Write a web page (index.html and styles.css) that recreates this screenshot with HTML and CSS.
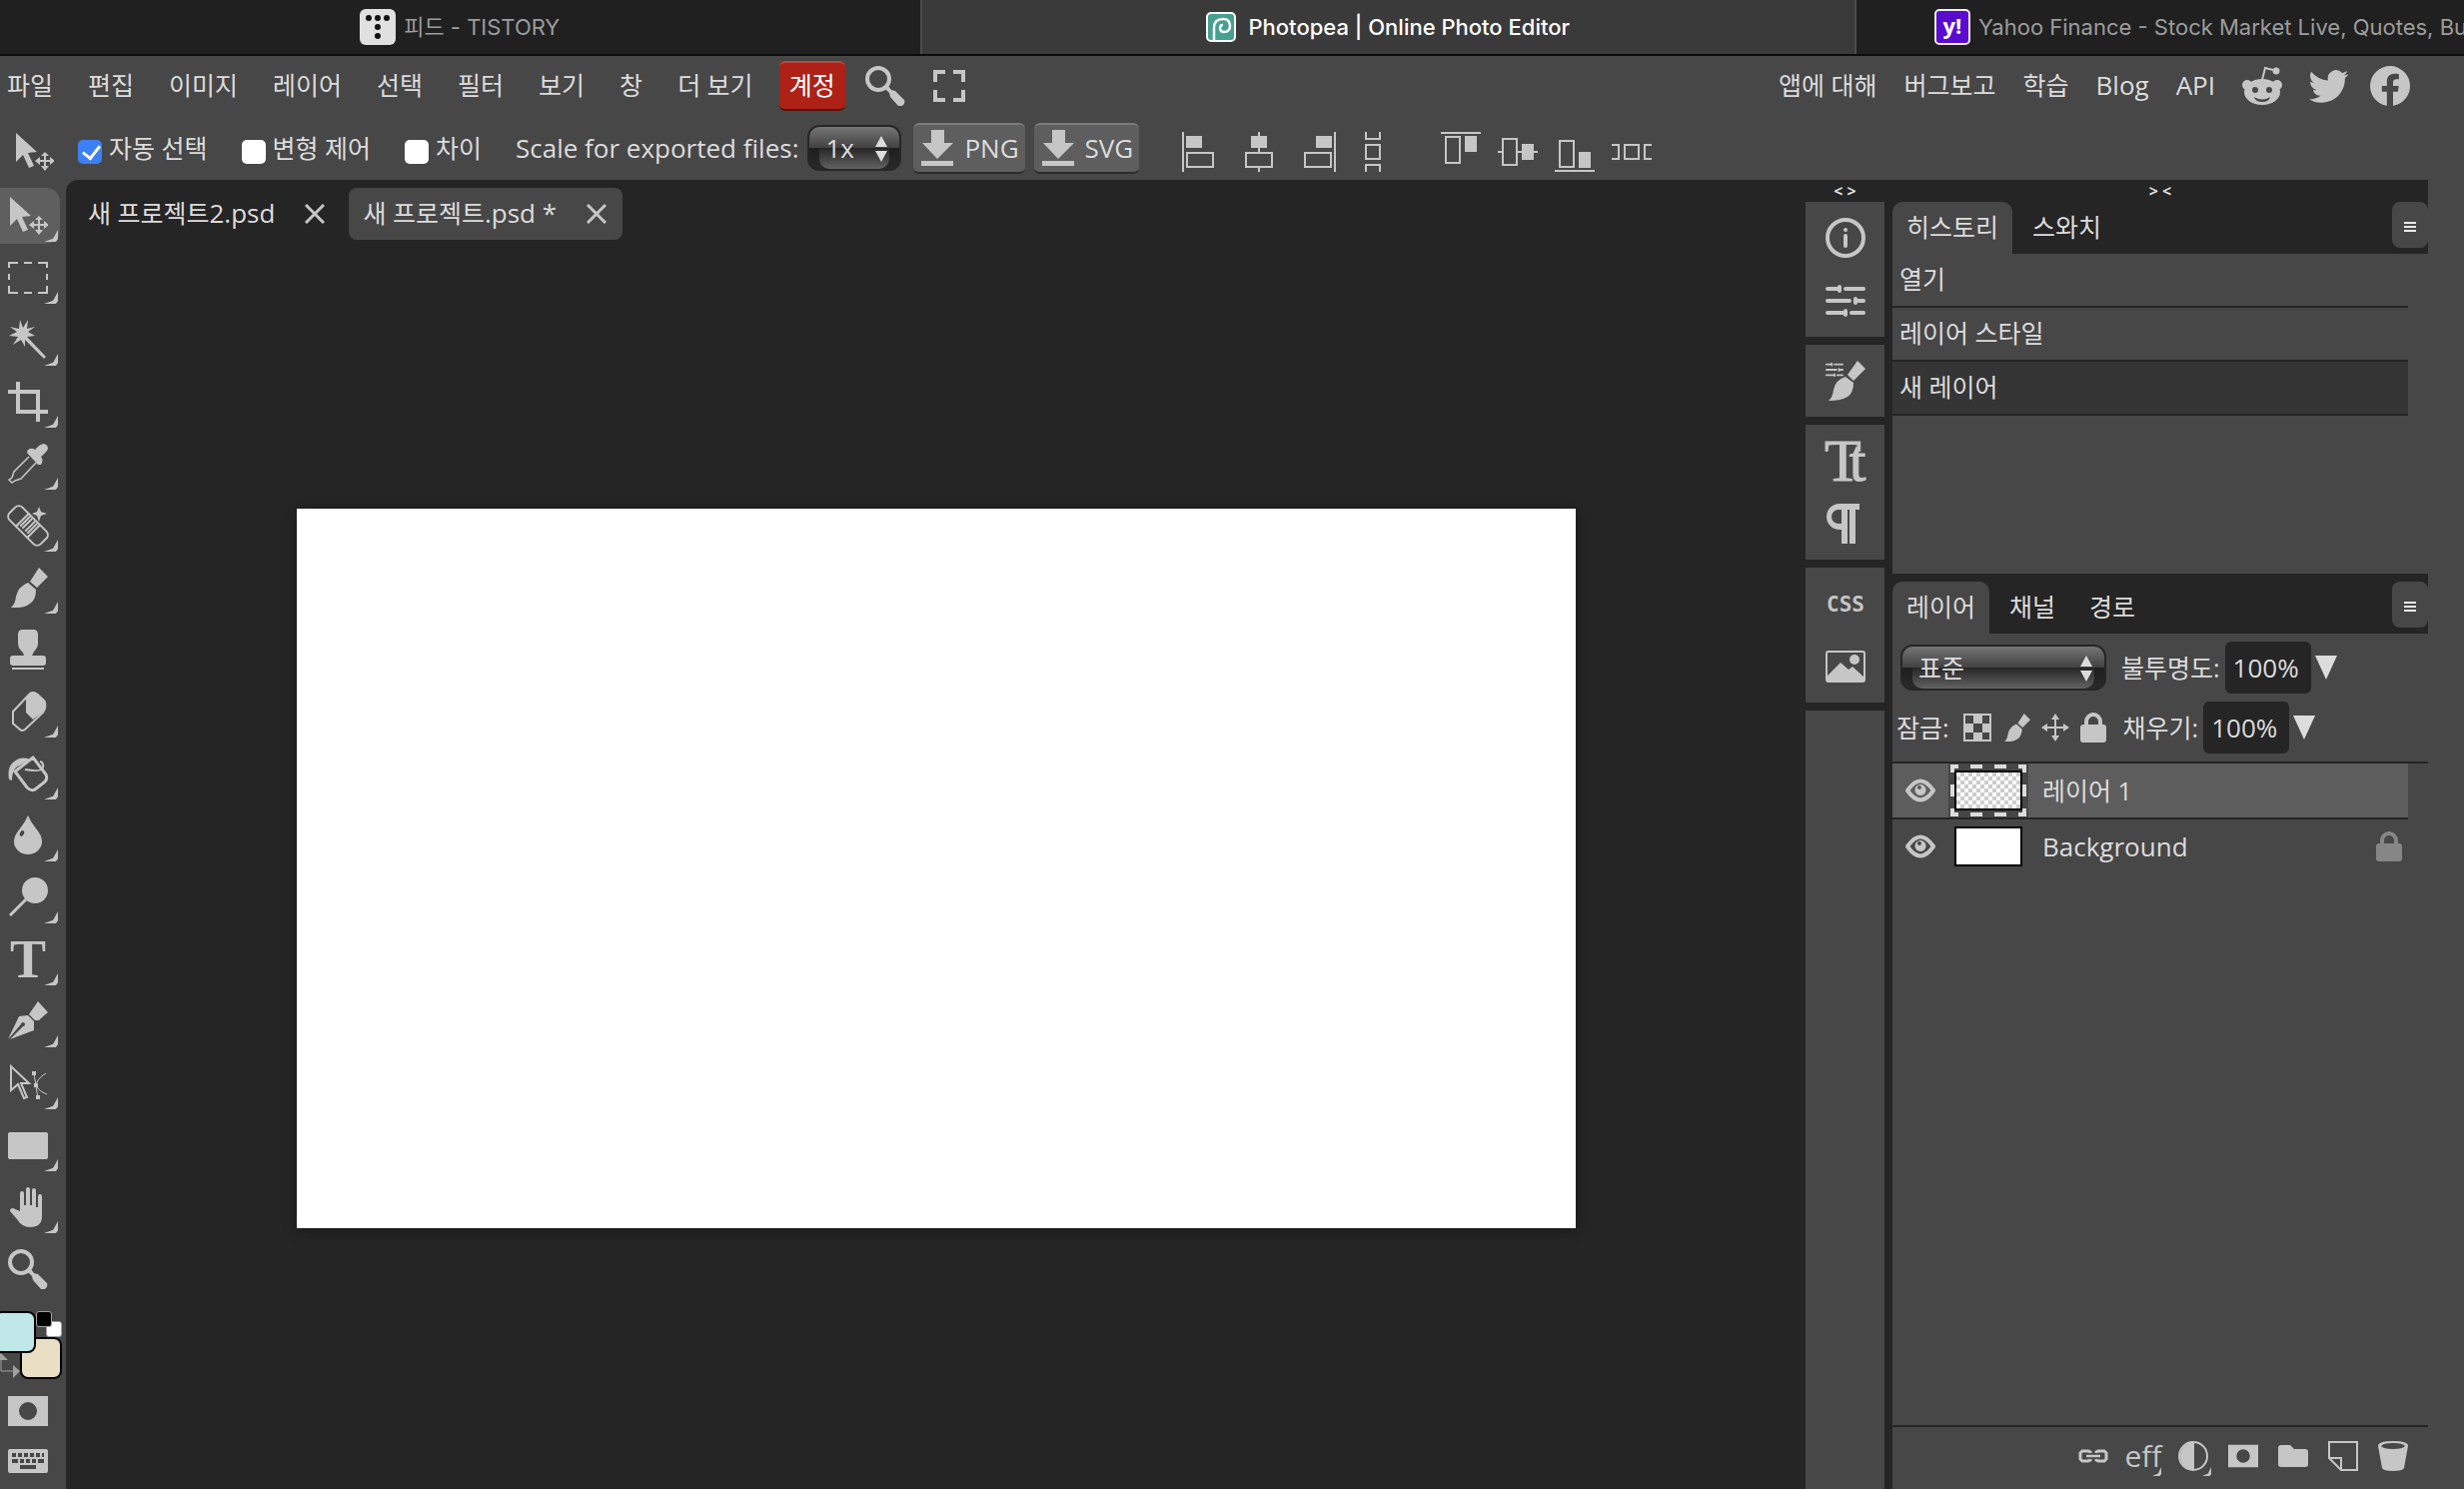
FILE: index.html
```html
<!DOCTYPE html>
<html lang="ko">
<head>
    <meta charset="UTF-8">
    <meta name="viewport" content="width=device-width, initial-scale=1.0">
    <title>Photopea | Online Photo Editor</title>
    <link rel="stylesheet" href="styles.css">
</head>
<body>
    <!-- shared icons -->
    <svg class="defs" aria-hidden="true">
        <symbol id="i-move" viewBox="0 0 40 40">
            <path d="M2 1v29l7-7 6 13 5-2-6-13 9-1z"/>
            <path d="M31 20l-4 4h3v4h-4v-3l-5 4 5 4v-3h4v4h-3l4 5 4-5h-3v-4h4v3l5-4-5-4v3h-4v-4h3z"/>
        </symbol>
        <symbol id="i-search" viewBox="0 0 40 40">
            <circle cx="13" cy="13" r="11" fill="none" stroke="currentColor" stroke-width="4"/>
            <path d="M20 23l3-3 3 4 4 1 9 9q1 3-1 5t-5 1l-8-9-1-4z"/>
        </symbol>
        <symbol id="i-brush" viewBox="0 0 40 40">
            <path d="M31 0l9 9-11 11-7-6zM20 15l8 7q0 10-6 14-6 5-19 4 4-3 5-11 2-10 12-14z"/>
        </symbol>
        <symbol id="i-mask" viewBox="0 0 40 40">
            <path fill-rule="evenodd" d="M0 5h40v30H0zM20 11a9 9 0 1 0 0 18 9 9 0 1 0 0-18z"/>
        </symbol>
        <symbol id="i-lock" viewBox="0 0 26 30">
            <path d="M6 13V9a7 7 0 0 1 14 0v4" fill="none" stroke="currentColor" stroke-width="4"/>
            <rect y="12" width="26" height="18" rx="3"/>
        </symbol>
        <symbol id="i-down" viewBox="0 0 32 36">
            <path d="M10 0h13v13h9L16 29 1 13h9zM0 31h32v5H0z"/>
        </symbol>
        <symbol id="i-x" viewBox="0 0 20 20">
            <path d="M1 1l18 18M19 1L1 19" stroke="currentColor" stroke-width="3"/>
        </symbol>
        <symbol id="i-eye" viewBox="0 0 30 24">
            <path d="M2 12q13-19 26 0-13 19-26 0z" fill="none" stroke="currentColor" stroke-width="4"/>
            <path fill-rule="evenodd" d="M15 6a5.500 5.500 0 1 0 .1 0zM14 7a2 2 0 1 1-.1 0z"/>
        </symbol>
        <symbol id="i-updown" viewBox="0 0 12 26">
            <path d="M6 0l6 11H0zM0 15h12L6 26z"/>
        </symbol>
    </svg>

    <nav class="browser-tabs">
        <a class="browser-tab" href="#">
            <svg class="fav" viewBox="0 0 36 36"><rect width="36" height="36" rx="6" fill="#e0e0e0"/><g fill="#111"><circle cx="9" cy="9" r="3"/><circle cx="18" cy="9" r="3"/><circle cx="27" cy="9" r="3"/><circle cx="18" cy="18" r="3"/><circle cx="18" cy="27" r="3"/></g></svg>
            피드 - TISTORY
        </a>
        <a class="browser-tab current" href="#">
            <svg class="fav small" viewBox="0 0 30 30"><rect x="1" y="1" width="28" height="28" rx="4" fill="#45a08f" stroke="#fff" stroke-width="2"/><path d="M8 28V16q0-9 9-9 7 0 7 7 0 6-6 6-4 0-4-4 0-3 3-3" fill="none" stroke="#fff" stroke-width="2.500"/></svg>
            Photopea | Online Photo Editor
        </a>
        <a class="browser-tab last" href="#">
            <svg class="fav" viewBox="0 0 36 36"><rect x="1" y="1" width="34" height="34" rx="4" fill="#5b0bd0" stroke="#eee" stroke-width="2"/><text x="18" y="25" text-anchor="middle" class="yahoo">y!</text></svg>
            Yahoo Finance - Stock Market Live, Quotes, Bu
        </a>
    </nav>

    <header class="menubar">
        <button>파일</button>
        <button>편집</button>
        <button>이미지</button>
        <button>레이어</button>
        <button>선택</button>
        <button>필터</button>
        <button>보기</button>
        <button>창</button>
        <button>더 보기</button>
        <button class="account">계정</button>
        <button class="menu-icon" aria-label="검색"><svg width="40" height="40"><use href="#i-search"/></svg></button>
        <button class="menu-icon full" aria-label="전체 화면"><svg width="32" height="32" viewBox="0 0 32 32"><path d="M2 12V2h10M20 2h10v10M30 20v10H20M12 30H2V20" fill="none" stroke="currentColor" stroke-width="4"/></svg></button>
        <div class="menu-links">
            <a href="#">앱에 대해</a>
            <a href="#">버그보고</a>
            <a href="#">학습</a>
            <a href="#" class="latin">Blog</a>
            <a href="#" class="latin">API</a>
            <a href="#" class="icon" aria-label="Reddit"><svg width="40" height="40" viewBox="0 0 40 40"><path d="M20 14l3-12 8 2" fill="none" stroke="currentColor" stroke-width="2"/><circle cx="34" cy="5" r="3.500"/><circle cx="5" cy="19" r="5"/><circle cx="35" cy="19" r="5"/><ellipse cx="20" cy="26" rx="18" ry="13"/><g class="hole"><circle cx="13" cy="24" r="3"/><circle cx="27" cy="24" r="3"/><path d="M12 31q8 5 16 0-1 5-8 5t-8-5z"/></g></svg></a>
            <a href="#" class="icon" aria-label="Twitter"><svg width="40" height="40" viewBox="0 0 24 24"><path d="M23.6 4.9a9.600 9.600 0 0 1-2.800.8 4.900 4.900 0 0 0 2.100-2.700 9.700 9.700 0 0 1-3.100 1.200 4.900 4.900 0 0 0-8.400 4.500A13.900 13.900 0 0 1 1.300 3.500a4.900 4.900 0 0 0 1.500 6.600 4.900 4.900 0 0 1-2.200-.6 4.900 4.900 0 0 0 3.900 4.900 4.900 4.900 0 0 1-2.200.1 4.900 4.900 0 0 0 4.600 3.400A9.900 9.900 0 0 1 0 19.900 13.900 13.900 0 0 0 7.500 22c9.100 0 14.300-7.700 14-14.600a10 10 0 0 0 2.100-2.500z"/></svg></a>
            <a href="#" class="icon fb" aria-label="Facebook"><svg width="40" height="40" viewBox="0 0 24 24"><path d="M24 12a12 12 0 1 0-13.900 11.900v-8.400h-3V12h3V9.400c0-3 1.800-4.700 4.500-4.700 1.300 0 2.700.2 2.700.2v3h-1.500c-1.500 0-2 .9-2 1.900V12h3.400l-.5 3.500h-2.900v8.400A12 12 0 0 0 24 12z"/></svg></a>
        </div>
    </header>

    <div class="options">
        <svg class="current-tool" width="40" height="40"><use href="#i-move"/></svg>
        <label class="check"><input type="checkbox" checked> 자동 선택</label>
        <label class="check"><input type="checkbox"> 변형 제어</label>
        <label class="check"><input type="checkbox"> 차이</label>
        <label class="latin scale-label" for="scale">Scale for exported files:</label>
        <span class="select scale">
            <select id="scale"><option>1x</option><option>2x</option></select>
            <svg width="12" height="26"><use href="#i-updown"/></svg>
        </span>
        <button class="export"><svg width="32" height="36"><use href="#i-down"/></svg>PNG</button>
        <button class="export"><svg width="32" height="36"><use href="#i-down"/></svg>SVG</button>
        <div class="align">
            <button aria-label="왼쪽 정렬"><svg viewBox="0 0 40 40"><path d="M0 0h2v40H0zM4 4h16v12H4z"/><path class="line" d="M5 21h26v14H5z"/></svg></button>
            <button aria-label="가운데 정렬"><svg viewBox="0 0 40 40"><path d="M19 0h2v20h-2zM19 36h2v4h-2zM12 4h16v12H12z"/><path class="line" d="M7 21h26v14H7z"/></svg></button>
            <button aria-label="오른쪽 정렬"><svg viewBox="0 0 40 40"><path d="M38 0h2v40h-2zM20 4h16v12H20z"/><path class="line" d="M9 21h26v14H9z"/></svg></button>
            <button aria-label="세로 분배"><svg viewBox="0 0 40 40"><path class="line" d="M13 0v7h14V0M13 13h14v14H13zM13 40v-7h14v7"/></svg></button>
        </div>
        <div class="align">
            <button aria-label="위쪽 정렬"><svg viewBox="0 0 40 40"><path d="M0 0h40v2H0zM24 4h12v16H24z"/><path class="line" d="M5 5h14v26H5z"/></svg></button>
            <button aria-label="중간 정렬"><svg viewBox="0 0 40 40"><path d="M0 19h4v2H0zM20 19h20v2H20zM24 12h12v16H24z"/><path class="line" d="M5 7h14v26H5z"/></svg></button>
            <button aria-label="아래쪽 정렬"><svg viewBox="0 0 40 40"><path d="M0 38h40v2H0zM24 20h12v16H24z"/><path class="line" d="M5 9h14v26H5z"/></svg></button>
            <button aria-label="가로 분배"><svg viewBox="0 0 40 40"><path class="line" d="M0 13h7v14H0M13 13h14v14H13zM40 13h-7v14h7"/></svg></button>
        </div>
    </div>

    <main class="editor">
        <aside class="toolbar">
            <button class="tool on more" aria-label="이동"><svg><use href="#i-move"/></svg></button>
            <button class="tool more" aria-label="사각형 선택"><svg viewBox="0 0 40 40"><path class="line" d="M1 10V5h9M16 5h8M30 5h9v5M39 16v6M39 28v7h-9M24 35h-8M10 35H1v-7M1 22v-6"/></svg></button>
            <button class="tool more" aria-label="요술봉"><svg viewBox="0 0 40 40"><path d="M12 0l3 8 5-8-1 9 8-2-7 5 7 4-8 1 19 20-2 2-19-19 0 7-4-7-8 5 5-8-9-1 8-4-7-5 9 2z"/></svg></button>
            <button class="tool more" aria-label="자르기"><svg viewBox="0 0 40 40"><path d="M0 10h30v30M10 0v30h30" fill="none" stroke="currentColor" stroke-width="4"/></svg></button>
            <button class="tool more" aria-label="스포이드"><svg viewBox="0 0 40 40"><path d="M19 9q0-3 3-4t5 1q5-6 9-6 4 1 4 5-1 3-7 8 3 3 0 8l-3 0z"/><path d="M21 13L6 28 4 34l-3 2 3 3 3-2 6-2 15-16" fill="none" stroke="currentColor" stroke-width="1.500"/></svg></button>
            <button class="tool more" aria-label="스팟 복구"><svg viewBox="0 0 40 40"><g transform="rotate(45 20 20)" fill="none" stroke="currentColor" stroke-width="2"><rect x="-2" y="11" width="44" height="18" rx="5"/><path d="M12 11v18M28 11v18"/><path d="M15 12v16M18 12v16M22 12v16M25 12v16" stroke-dasharray="14 2"/></g><path d="M31 1l2 5 6 2-6 2-2 6-2-6-5-2 5-2z"/></svg></button>
            <button class="tool more" aria-label="브러시"><svg><use href="#i-brush"/></svg></button>
            <button class="tool" aria-label="복제 도장"><svg viewBox="0 0 40 40"><path d="M15 0h10q5 0 5 5v9q0 4-4 8l-2 4h11q3 0 3 3v4q0 3-3 3H5q-3 0-3-3v-4q0-3 3-3h11q-1-4-3-5-3-3-3-7V5q0-5 5-5zM4 38h32v2H4z"/></svg></button>
            <button class="tool more" aria-label="지우개"><svg viewBox="0 0 40 40"><path d="M5 20L22 2q3-2 6 0l8 7q2 2 1 8l-2 4-18 17q-3 2-5 0l-7-6z" fill="none" stroke="currentColor" stroke-width="2"/><path d="M18 6l4-4q4-3 8 0l6 6q3 4 1 11L25 28l-7-7z"/></svg></button>
            <button class="tool more" aria-label="페인트 통"><svg viewBox="0 0 40 40"><path d="M25 4l13 17q2 5-2 8l-9 7q-4 2-8-2L7 18z" fill="none" stroke="currentColor" stroke-width="3"/><path d="M1 26q-2-12 4-17 8-7 17-3L8 14q-4 4-4 13z"/><path d="M17 16q16 3 18-2 1-5-3-6" fill="none" stroke="currentColor" stroke-width="2"/></svg></button>
            <button class="tool more" aria-label="흐림"><svg viewBox="0 0 40 40"><path d="M20 0q3 7 8 13 6 7 6 13a14 13 0 0 1-28 0q0-6 6-13 5-6 8-13z"/><ellipse class="hole" cx="14" cy="18" rx="2" ry="3" transform="rotate(25 14 18)"/></svg></button>
            <button class="tool more" aria-label="닷지"><svg viewBox="0 0 40 40"><circle cx="27" cy="13" r="13"/><path d="M2 38l18-18" stroke="currentColor" stroke-width="3"/></svg></button>
            <button class="tool more" aria-label="문자"><svg viewBox="0 0 40 40"><text x="20" y="38" text-anchor="middle" class="glyph-t">T</text></svg></button>
            <button class="tool more" aria-label="펜"><svg viewBox="0 0 40 40"><path d="M30 0l10 11q-6 5-9 8h-4l-6-6zM11 15l9-1 6 6v9L2 38l13-13a2 2 0 1 0-2-2L0 38z"/></svg></button>
            <button class="tool more" aria-label="경로 선택"><svg viewBox="0 0 40 40"><path class="line" d="M3 3v24l7-6 6 14 3-1-6-14 8 0z"/><path d="M26 10l2 13 2 12M38 10q-10 6-10 13M28 23q4 6 11 8" fill="none" stroke="currentColor"/><path d="M24 8h4v4h-4zM26 20h4v4h-4zM28 32h4v4h-4z"/></svg></button>
            <button class="tool more" aria-label="사각형"><svg viewBox="0 0 40 40"><rect y="7" width="40" height="27" rx="2"/></svg></button>
            <button class="tool more" aria-label="손"><svg viewBox="0 0 40 40"><path d="M12 24V6q0-2 2-2t2 2v12h2V2q0-2 2-2t2 2v16h2V3q0-2 2-2t2 2v17h2V9q0-2 2-2t2 2v20q0 11-12 11-8 0-13-8L2 24q0-3 3-3z"/></svg></button>
            <button class="tool" aria-label="돋보기"><svg><use href="#i-search"/></svg></button>

            <div class="colors">
                <button class="swatch back" aria-label="배경색"></button>
                <button class="swatch front" aria-label="전경색"></button>
                <button class="mini white" aria-label="흰색"></button>
                <button class="mini black" aria-label="검은색"></button>
                <svg class="swap" viewBox="0 0 20 26"><path d="M1 6v12h13" fill="none" stroke="currentColor"/><path d="M-6 7l7-7 7 7zM13 12l7 6-7 7z"/></svg>
            </div>
            <button class="tool flat" aria-label="빠른 마스크"><svg><use href="#i-mask"/></svg></button>
            <button class="tool flat" aria-label="키보드"><svg viewBox="0 0 40 40"><path fill-rule="evenodd" d="M2 8h36q2 0 2 2v20q0 2-2 2H2q-2 0-2-2V10q0-2 2-2zM4 12v4h4v-4zM10 12v4h4v-4zM16 12v4h4v-4zM22 12v4h4v-4zM28 12v4h4v-4zM34 12v4h2v-4zM4 18v4h6v-4zM12 18v4h4v-4zM18 18v4h4v-4zM24 18v4h4v-4zM30 18v4h6v-4zM12 24v4h16v-4z"/></svg></button>
        </aside>

        <section class="workspace">
            <div class="docs">
                <div class="doc"><span class="name">새 프로젝트<span class="latin">2.psd</span></span><button aria-label="닫기"><svg width="20" height="20"><use href="#i-x"/></svg></button></div>
                <div class="doc active"><span class="name">새 프로젝트<span class="latin">.psd *</span></span><button aria-label="닫기"><svg width="20" height="20"><use href="#i-x"/></svg></button></div>
            </div>
            <div class="stage"><div class="canvas"></div></div>
        </section>

        <aside class="strip">
            <button class="fold">&lt; &gt;</button>
            <div class="block">
                <svg viewBox="0 0 40 40"><circle cx="20" cy="20" r="18" fill="none" stroke="currentColor" stroke-width="4"/><circle cx="20" cy="12" r="2"/><rect x="18" y="16" width="4" height="14" rx="2"/></svg>
                <svg viewBox="0 0 40 40"><g id="sliders" stroke="currentColor" stroke-width="4" stroke-linecap="round"><path d="M2 8h11M20 8h18M2 20h22M31 20h7M2 32h17M26 32h12"/><path d="M14 6v4M30 18v4M20 30v4"/></g></svg>
            </div>
            <div class="block">
                <svg viewBox="0 0 40 40"><path d="M32 0l8 8-12 12-6-6zM20 16l8 6q0 10-6 14-6 4-19 4 4-3 5-11 2-10 12-13z"/><use href="#sliders" transform="scale(.45)"/></svg>
            </div>
            <div class="block">
                <svg viewBox="0 0 40 40"><text x="-1" y="40" class="glyph-tt">T<tspan dx="-12">t</tspan></text></svg>
                <svg viewBox="0 0 40 40"><path d="M14 0h20v6h-4v34h-6V6h-2v34h-6V26h-2A13 13 0 0 1 14 0zM16 6h-3a7 7 0 0 0 0 14h3z" fill-rule="evenodd"/></svg>
            </div>
            <div class="block">
                <svg viewBox="0 0 40 40"><text x="20" y="28" text-anchor="middle" class="glyph-css">CSS</text></svg>
                <svg viewBox="0 0 40 40"><rect x="1" y="5" width="38" height="30" rx="2" class="line"/><circle cx="29" cy="13" r="5"/><path d="M1 30l14-14 8 7 4-3 12 11v4H1z"/></svg>
            </div>
            <div class="block rest"></div>
        </aside>

        <aside class="panels">
            <button class="fold">&gt; &lt;</button>
            <section class="panel history">
                <div class="tabs">
                    <button class="active">히스토리</button>
                    <button>스와치</button>
                    <button class="burger" aria-label="메뉴"><svg width="12" height="10"><path d="M0 1h12M0 5h12M0 9h12" stroke="currentColor" stroke-width="2"/></svg></button>
                </div>
                <ul>
                    <li>열기</li>
                    <li>레이어 스타일</li>
                    <li class="now">새 레이어</li>
                </ul>
            </section>
            <section class="panel layers">
                <div class="tabs">
                    <button class="active">레이어</button>
                    <button>채널</button>
                    <button>경로</button>
                    <button class="burger" aria-label="메뉴"><svg width="12" height="10"><path d="M0 1h12M0 5h12M0 9h12" stroke="currentColor" stroke-width="2"/></svg></button>
                </div>
                <div class="props">
                    <span class="select blend">
                        <select aria-label="혼합 모드"><option>표준</option><option>곱하기</option></select>
                        <svg width="12" height="26"><use href="#i-updown"/></svg>
                    </span>
                    <label for="opacity">불투명도:</label>
                    <input id="opacity" type="text" value="100%">
                    <button class="drop" aria-label="불투명도 조절"><svg width="22" height="24"><path d="M0 0h22L11 24z"/></svg></button>
                </div>
                <div class="props locks">
                    <span class="lock-label">잠금:</span>
                    <svg width="28" height="28" viewBox="0 0 28 28"><path class="line" d="M1 1h26v26H1z"/><path d="M10 1h9v9h-9zM1 10h9v9H1zM19 10h8v9h-8zM10 19h9v8h-9z"/></svg>
                    <svg width="28" height="30"><use href="#i-brush"/></svg>
                    <svg width="28" height="28" viewBox="0 0 28 28"><path d="M14 0l4 6h-3v7h7v-3l6 4-6 4v-3h-7v7h3l-4 6-4-6h3v-7H6v3l-6-4 6-4v3h7V6h-3z"/></svg>
                    <svg width="26" height="30"><use href="#i-lock"/></svg>
                    <label for="fill">채우기:</label>
                    <input id="fill" type="text" value="100%">
                    <button class="drop" aria-label="채우기 조절"><svg width="22" height="24"><path d="M0 0h22L11 24z"/></svg></button>
                </div>
                <div class="layer-list">
                    <div class="layer selected">
                        <svg class="eye" width="30" height="24"><use href="#i-eye"/></svg>
                        <span class="thumb-cell">
                            <svg class="marks" viewBox="0 0 76 52"><path d="M2 8V2h6M20 2h12M44 2h12M68 2h6v6M74 20v12M74 44v6h-6M56 50H44M32 50H20M8 50H2v-6M2 32V20" fill="none" stroke="currentColor" stroke-width="4"/></svg>
                            <span class="thumb clear"></span>
                        </span>
                        <span>레이어 1</span>
                    </div>
                    <div class="layer">
                        <svg class="eye" width="30" height="24"><use href="#i-eye"/></svg>
                        <span class="thumb-cell"><span class="thumb"></span></span>
                        <span class="latin">Background</span>
                        <svg class="locked" width="26" height="30"><use href="#i-lock"/></svg>
                    </div>
                </div>
                <div class="actions">
                    <button aria-label="연결"><svg viewBox="0 0 30 30"><g fill="none" stroke="currentColor" stroke-width="3"><path d="M12 12v-1l-2-1H4l-2 2v6l2 2h6l2-1v-1M18 12v-1l2-1h6l2 2v6l-2 2h-6l-2-1v-1"/><path d="M8 15h14" stroke-width="2.500"/></g></svg></button>
                    <button class="more" aria-label="효과"><svg viewBox="0 0 30 30"><text x="15" y="26" text-anchor="middle" class="glyph-eff">eff</text></svg></button>
                    <button class="more" aria-label="조정"><svg viewBox="0 0 30 30"><circle cx="15" cy="15" r="14" class="line"/><path d="M16 1a14 14 0 0 0 0 28z"/></svg></button>
                    <button aria-label="마스크"><svg><use href="#i-mask"/></svg></button>
                    <button aria-label="폴더"><svg viewBox="0 0 30 30"><path d="M3 4h9l4 4h11q3 0 3 3v12q0 3-3 3H3q-3 0-3-3V7q0-3 3-3z"/></svg></button>
                    <button aria-label="새 레이어"><svg viewBox="0 0 30 30"><path class="line" d="M1 1h28v28H13L1 17zM1 17h12v12"/></svg></button>
                    <button aria-label="삭제"><svg viewBox="0 0 30 30"><path fill-rule="evenodd" d="M0 5q0-5 15-5t15 5l-4 22q-1 3-11 3T4 27zM3 5q2 3 12 3t12-3q-2-3-12-3T3 5z"/></svg></button>
                </div>
            </section>
        </aside>
    </main>
</body>
</html>
```
FILE: styles.css
```css
* {
    box-sizing: border-box;
}

body {
    margin: 0;
    height: 100vh;
    display: flex;
    flex-direction: column;
    overflow: hidden;
    background: #474747;
    color: #dcdcdc;
    font-family: "Open Sans", "Noto Sans CJK KR", sans-serif;
    font-size: 25px;
    line-height: 32px;
}

button, input, select {
    margin: 0;
    padding: 0;
    border: none;
    background: none;
    color: inherit;
    font: inherit;
}

a {
    color: inherit;
    text-decoration: none;
}

svg {
    display: block;
    flex: none;
    fill: currentColor;
    color: #c6c6c6;
    overflow: visible;
}

.defs {
    position: absolute;
    width: 0;
    height: 0;
}

.line {
    fill: none;
    stroke: currentColor;
    stroke-width: 2;
}

.hole {
    fill: #474747;
}

.latin {
    font-size: 26px;
}

/* browser tabs */
.browser-tabs {
    display: flex;
    flex: none;
    height: 56px;
    background: #202020;
    border-bottom: 2px solid #0c0c0c;
    font-family: Inter, "Noto Sans CJK KR", sans-serif;
    font-size: 22px;
    color: #9c9c9c;
}

.browser-tab {
    flex: 922 1 0;
    display: flex;
    align-items: center;
    justify-content: center;
    gap: 8px;
    white-space: nowrap;
    overflow: hidden;
}

.browser-tab.current {
    flex-grow: 935;
    gap: 12px;
    background: #3a3a3a;
    border-left: 2px solid #4c4c4c;
    border-right: 2px solid #4c4c4c;
    color: #fff;
    font-weight: 500;
}

.browser-tab.last {
    flex-grow: 609;
    justify-content: flex-start;
}

.fav {
    width: 36px;
    height: 36px;
}

.fav.small {
    width: 30px;
    height: 30px;
}

.last .fav {
    margin-left: 78px;
}

.yahoo {
    fill: #fff;
    font: bold 22px "Open Sans", sans-serif;
}

/* menu */
.menubar {
    display: flex;
    flex: none;
    align-items: center;
    height: 60px;
    padding: 0 54px 0 7px;
    white-space: nowrap;
}

.menubar > button {
    margin-right: 35px;
    padding-bottom: 3px;
}

.menubar > .account {
    height: 50px;
    margin: 0 20px 0 -9px;
    padding: 0 10px 3px;
    background: #ad2117;
    border-top: 2px solid #c0453c;
    border-bottom: 2px solid #55130e;
    border-radius: 6px;
    color: #fff;
}

.menubar > .menu-icon {
    margin-right: 28px;
    padding: 0;
}

.menu-links {
    display: flex;
    align-items: center;
    gap: 27px;
    margin-left: auto;
}

.menu-links a {
    padding-bottom: 3px;
}

.menu-links .icon {
    padding: 0;
}

.menu-links .fb {
    margin-left: -6px;
}

/* tool options */
.options {
    display: flex;
    flex: none;
    align-items: center;
    height: 64px;
    padding-left: 14px;
    white-space: nowrap;
}

.current-tool {
    margin: 8px 24px 0 0;
}

.check {
    display: flex;
    align-items: center;
    gap: 7px;
    margin-right: 34px;
}

.check input {
    appearance: none;
    width: 24px;
    height: 24px;
    background: #fff;
    border-radius: 5px;
    margin-top: 8px;
}

.check input:checked {
    background: #3c80f6;
}

.check input:checked::before {
    content: "";
    display: block;
    width: 8px;
    height: 14px;
    margin: 2px 0 0 8px;
    border: solid #fff;
    border-width: 0 3px 3px 0;
    transform: rotate(38deg);
}

.scale-label {
    margin-right: 9px;
}

.select {
    position: relative;
    display: block;
    height: 46px;
    border: 2px solid #262626;
    border-radius: 12px;
    background: linear-gradient(#757575, #424242 49%, #1e1e1e 50%, #2a2a2a);
    overflow: hidden;
}

.select::before {
    content: "";
    position: absolute;
    inset: 21px 10px 0;
    border-radius: 0 0 10px 10px;
    background: linear-gradient(#262626, #626262);
}

.select select {
    position: relative;
    appearance: none;
    width: 100%;
    height: 100%;
    padding-left: 16px;
}

.select svg {
    position: absolute;
    right: 12px;
    top: 9px;
    color: #dcdcdc;
}

.scale {
    width: 94px;
    margin-right: 12px;
    font-size: 26px;
}

.export {
    display: flex;
    align-items: center;
    gap: 11px;
    height: 51px;
    margin-right: 9px;
    padding: 0 6px 0 8px;
    background: #5e5e5e;
    border-top: 2px solid #7c7c7c;
    border-bottom: 2px solid #2c2c2c;
    border-radius: 6px;
    font-size: 26px;
}

.align {
    display: flex;
    gap: 17px;
    margin: 8px 0 0 34px;
}

.align + .align {
    margin-left: 48px;
}

.align svg {
    width: 40px;
    height: 40px;
}

/* editor */
.editor {
    flex: 1;
    min-height: 0;
    display: flex;
}

.toolbar {
    display: flex;
    flex-direction: column;
    gap: 6px;
    width: 66px;
    padding-top: 8px;
}

.tool {
    position: relative;
    flex: none;
    width: 60px;
    height: 56px;
    padding-left: 8px;
    border-radius: 0 14px 14px 0;
}

.tool svg {
    width: 40px;
    height: 40px;
}

.tool.on {
    background: #5f5f5f;
}

/* corner mark on tools with a submenu */
.more::after {
    content: "";
    position: absolute;
    right: 2px;
    bottom: 2px;
    width: 14px;
    height: 12px;
    background: #c6c6c6;
    clip-path: polygon(100% 0, 100% 78%, 85% 100%, 0 100%, 65% 72%);
}

.colors {
    position: relative;
    height: 68px;
    margin-top: 8px;
}

.swatch {
    position: absolute;
    width: 42px;
    height: 42px;
    border: 2px solid #000;
    border-radius: 8px;
}

.front {
    left: -6px;
    top: 0;
    background: #c0e8e8;
}

.back {
    left: 20px;
    top: 26px;
    background: #e9dfc4;
}

.mini {
    position: absolute;
    width: 16px;
    height: 16px;
    border: 1px solid #a0a0a0;
    border-radius: 3px;
}

.black {
    left: 36px;
    top: 0;
    background: #000;
}

.white {
    left: 46px;
    top: 10px;
    background: #fff;
}

.swap {
    position: absolute;
    left: 0;
    top: 42px;
    width: 20px;
    height: 26px;
    color: #a0a0a0;
}

.flat {
    height: 44px;
}

.colors + .flat {
    margin-top: 4px;
}

.workspace {
    flex: 1;
    display: flex;
    flex-direction: column;
    min-width: 0;
    background: #252525;
    border-radius: 12px 0 0 0;
}

.docs {
    display: flex;
    gap: 8px;
    padding: 8px 8px 0;
}

.doc {
    display: flex;
    align-items: center;
    justify-content: space-between;
    gap: 30px;
    height: 52px;
    padding: 0 16px 0 14px;
    border-radius: 8px;
    white-space: nowrap;
}

.doc .name {
    padding-bottom: 3px;
}

.doc.active {
    background: #474747;
}

.stage {
    flex: 1;
    display: flex;
    align-items: center;
    justify-content: center;
    padding-top: 8px;
}

.canvas {
    width: 1280px;
    height: 720px;
    background: #fff;
    box-shadow: 0 2px 12px rgba(0, 0, 0, 0.4);
}

/* icon strip */
.strip {
    display: flex;
    flex-direction: column;
    gap: 8px;
    width: 87px;
    padding-right: 8px;
    background: #252525;
}

.fold {
    height: 22px;
    font-size: 16px;
    font-weight: bold;
    line-height: 22px;
    text-align: center;
}

.strip .fold {
    margin-bottom: -8px;
}

.block {
    display: flex;
    flex-direction: column;
    align-items: center;
    gap: 23px;
    padding: 16px 0;
    background: #474747;
}

.block svg {
    width: 40px;
    height: 40px;
}

.rest {
    flex: 1;
}

.glyph-t {
    font: bold 54px "Liberation Serif", serif;
}

.glyph-tt {
    font: 60px "Liberation Serif", serif;
    stroke: currentColor;
}

.glyph-css {
    font: bold 21px "DejaVu Sans Mono", monospace;
}

.glyph-eff {
    font: 30px "Open Sans", sans-serif;
}

/* right panels */
.panels {
    display: flex;
    flex-direction: column;
    width: 572px;
    padding-right: 36px;
    background: linear-gradient(to left, #474747 36px, #252525 36px);
}

.panels .fold {
    width: 100%;
}

.panel {
    display: flex;
    flex-direction: column;
    background: #474747;
}

.history {
    height: 372px;
    margin-bottom: 8px;
}

.layers {
    flex: 1;
    min-height: 0;
}

.tabs {
    display: flex;
    gap: 6px;
    height: 52px;
    background: #252525;
}

.tabs button {
    padding: 0 14px 3px;
    border-radius: 10px 10px 0 0;
}

.tabs .active {
    background: #474747;
}

.tabs .burger {
    height: 46px;
    margin-left: auto;
    padding: 4px 12px 0;
    border-radius: 8px;
    background: #474747;
}

.burger svg {
    color: #e8e8e8;
}

.history ul {
    margin: 0;
    padding: 0 20px 0 0;
    list-style: none;
}

.history li {
    height: 54px;
    padding-left: 7px;
    border-bottom: 2px solid #252525;
    line-height: 50px;
}

.history .now {
    background: #353535;
}

.props {
    display: flex;
    align-items: center;
    height: 60px;
    padding: 8px 0 0 8px;
    white-space: nowrap;
}

.blend {
    width: 206px;
    margin-right: 15px;
}

.props input {
    width: 86px;
    height: 52px;
    margin: 0 4px 0 5px;
    padding-left: 8px;
    background: #252525;
    border-radius: 6px;
    font-size: 26px;
}

.drop svg {
    color: #dcdcdc;
}

.locks {
    padding-left: 4px;
}

.locks > svg {
    margin-right: 11px;
}

.lock-label {
    margin-right: 14px;
}

.locks label {
    margin-left: 6px;
}

.layer-list {
    flex: 1;
    margin-top: 8px;
    border-top: 2px solid #252525;
}

.layer {
    display: flex;
    align-items: center;
    height: 56px;
    margin-right: 20px;
    border-bottom: 2px solid transparent;
}

.layer.selected {
    background: #5d5d5d;
    border-color: #252525;
}

.eye {
    margin: 0 13px;
}

.thumb-cell {
    position: relative;
    display: grid;
    place-items: center;
    width: 80px;
    height: 54px;
    margin-right: 14px;
    background: #474747;
}

.marks {
    position: absolute;
    width: 76px;
    height: 52px;
    color: #dcdcdc;
}

.thumb {
    position: relative;
    width: 68px;
    height: 40px;
    border: 2px solid #000;
    background: #fff;
}

.clear {
    background: repeating-conic-gradient(#ccc 0 25%, #fff 0 50%) 0 0 / 8px 8px;
}

.locked {
    margin: 0 6px 0 auto;
    color: #868686;
}

.actions {
    display: flex;
    justify-content: flex-end;
    gap: 20px;
    height: 64px;
    padding: 14px 20px 18px;
    border-top: 2px solid #252525;
}

.actions button {
    position: relative;
}

.actions svg {
    width: 30px;
    height: 30px;
}

.actions .more::after {
    right: -3px;
    bottom: -5px;
    width: 9px;
    height: 9px;
}
```
